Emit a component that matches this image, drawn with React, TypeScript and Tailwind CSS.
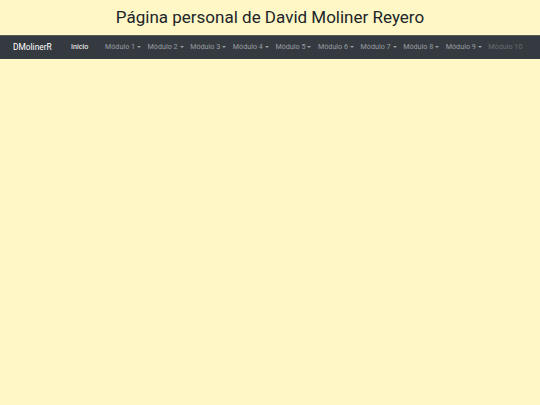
import React from 'react'

const modules = ['Módulo 1', 'Módulo 2', 'Módulo 3', 'Módulo 4', 'Módulo 5', 'Módulo 6', 'Módulo 7', 'Módulo 8', 'Módulo 9']

function Caret() {
  return (
    <span className="ml-[2px] inline-block h-0 w-0 border-x-[2.2px] border-t-[2.4px] border-x-transparent border-t-current align-middle" />
  )
}

export default function App() {
  return (
    <div className="min-h-[405px] w-full bg-[#fff8c6] font-['Roboto',sans-serif] text-[#212529]">
      <header className="flex h-[35px] items-center justify-center">
        <h1 className="text-[17px] font-normal leading-none">Página personal de David Moliner Reyero</h1>
      </header>
      <nav className="flex h-[24px] items-center overflow-hidden whitespace-nowrap border-t border-[#5a5a52] bg-[#343a40] pl-[13px] text-[7.2px]">
        <span className="w-[58px] shrink-0 text-[8.4px] text-white">DMolinerR</span>
        <span className="w-[34px] shrink-0 text-white">Inicio</span>
        <div className="flex shrink-0 items-center">
          {modules.map((m) => (
            <span key={m} className="flex w-[42.6px] items-center text-[#9a9da0]">
              {m}
              <Caret />
            </span>
          ))}
          <span className="text-[#686c70]">Módulo 10</span>
        </div>
      </nav>
    </div>
  )
}
